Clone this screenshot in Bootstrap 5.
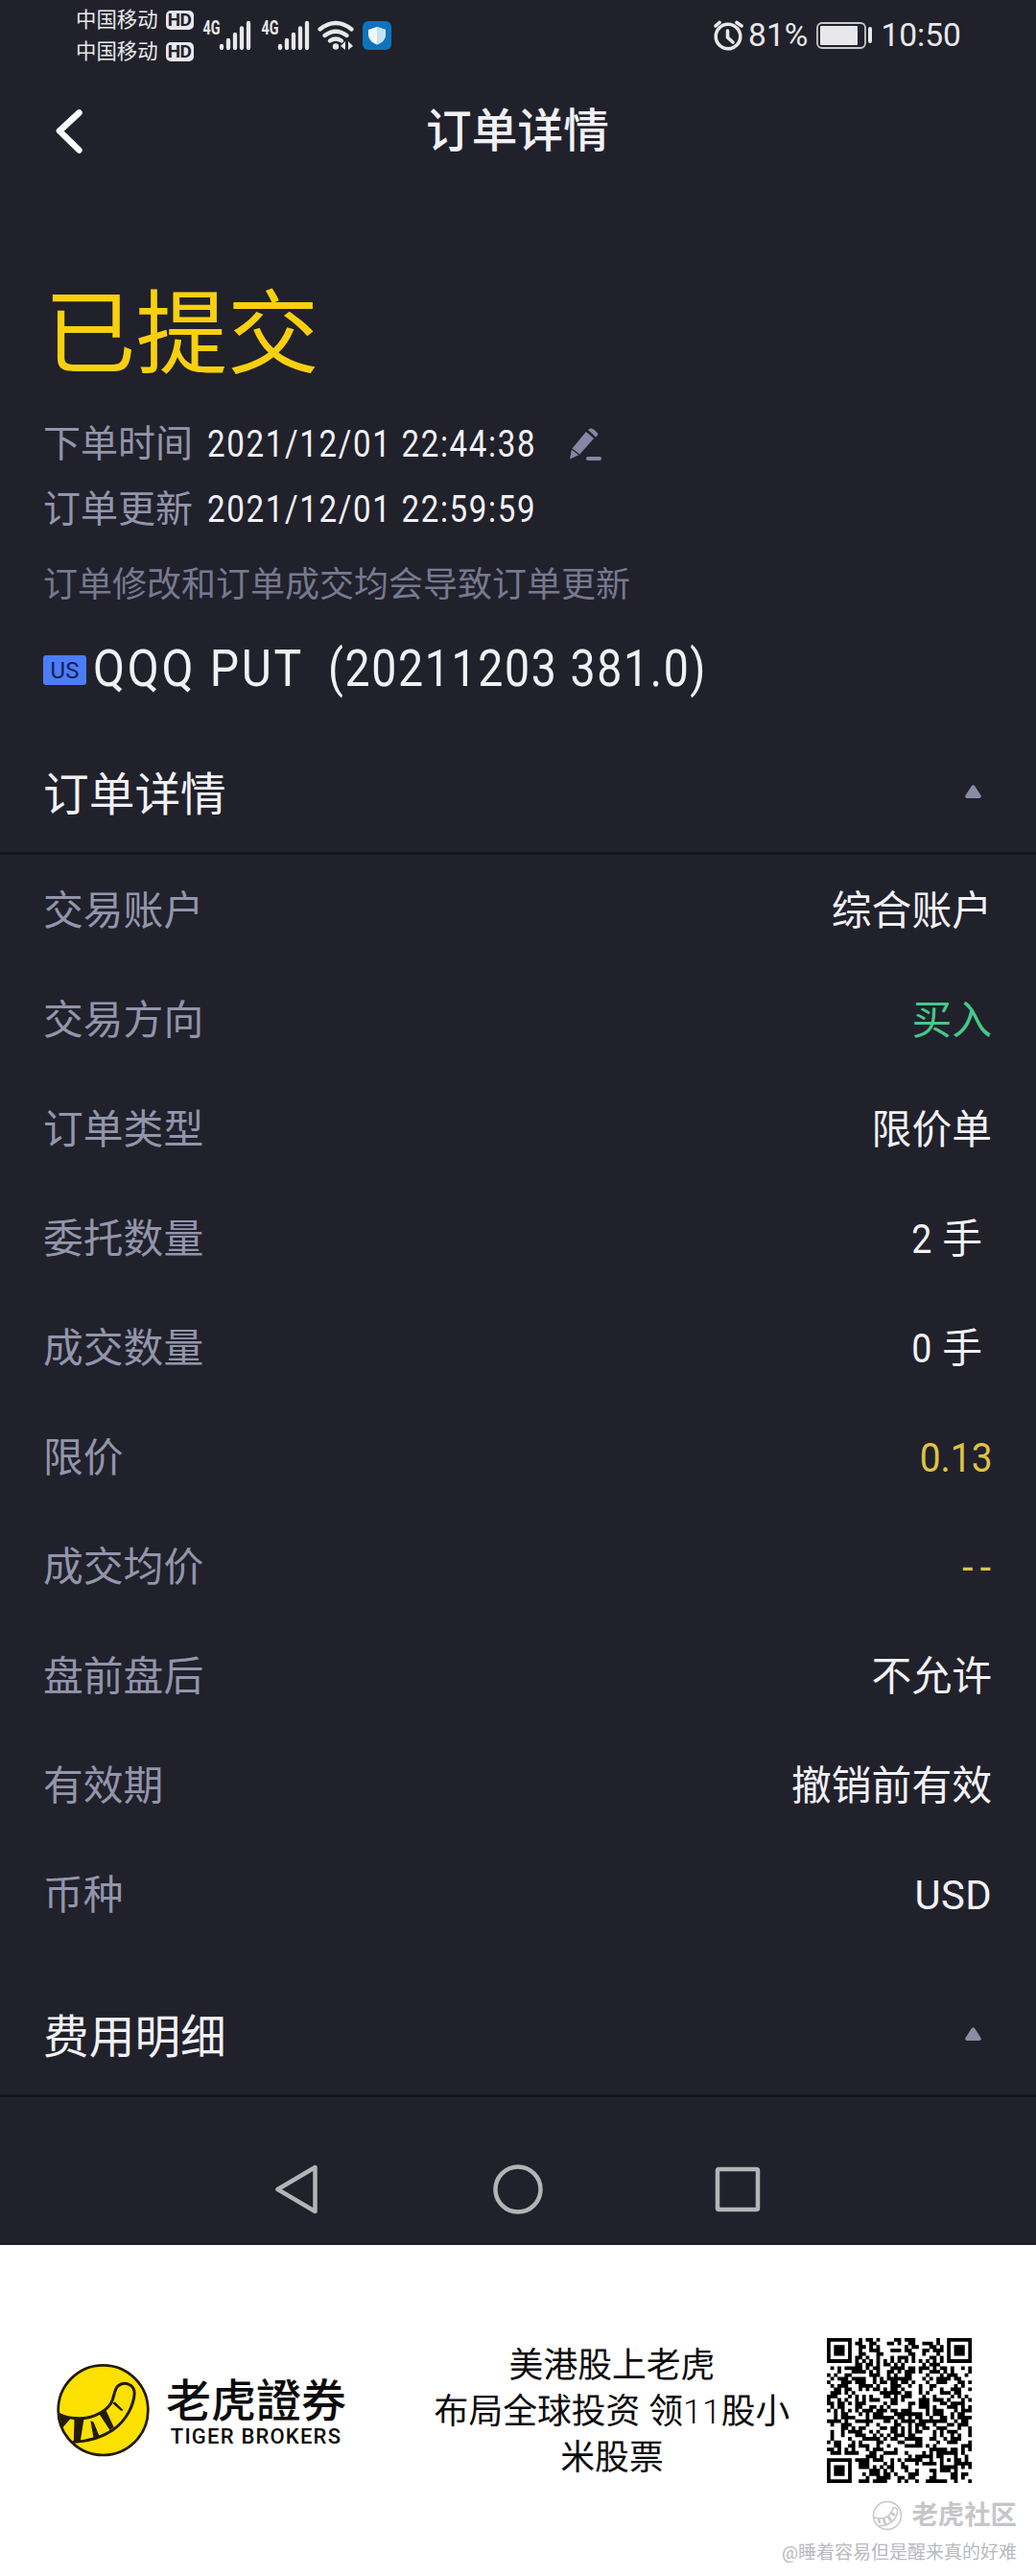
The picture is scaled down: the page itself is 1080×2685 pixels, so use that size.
<!DOCTYPE html>
<html lang="zh-CN">
<head>
<meta charset="utf-8">
<meta name="viewport" content="width=device-width, initial-scale=1">
<title>订单详情</title>
<link href="https://cdn.jsdelivr.net/npm/bootstrap@5.3.0/dist/css/bootstrap.min.css" rel="stylesheet">
<style>
  body { font-family: Roboto, "Noto Sans CJK SC", sans-serif; background: #fff; color: #f1f1f5; line-height: 1; }
  svg { display: block; flex: none; }
  .phone { background: #21212b; height: 2340px; }
  .statusbar { height: 74px; padding: 0 78px 0 79px; color: #e8e8ea; }
  .carrier { font-size: 21.4px; line-height: 33px; }
  .hd { width: 29px; height: 20px; border-radius: 5px; background: #e8e8ea; color: #21212b; font-size: 19px; line-height: 20px; font-weight: 700; letter-spacing: -.5px; }
  .clock { font-size: 33.6px; line-height: 74px; }
  .titlebar { height: 126px; padding-left: 57px; padding-right: 58px; }
  .titlebar h1 { font-size: 47.7px; line-height: 126px; font-weight: 500; }
  .summary { padding: 84px 46px 0 45px; height: 568px; }
  .state { font-size: 95.5px; line-height: 130px; color: #f8d010; padding-left: 1px; }
  .stamps { padding-top: 15px; }
  .stamp { height: 68px; font-size: 39px; line-height: 68px; }
  /* digits are set narrow, with open spacing */
  .when, .sym, .leg { display: inline-block; white-space: nowrap; transform-origin: 0 50%; }
  .stamp .when { letter-spacing: 1.9px; margin-left: 15px; width: 340px; transform: scaleX(.85); }
  .pencil { margin-left: 36px; }
  .muted-label { color: #9295ab; }
  .hint { font-size: 36px; line-height: 90px; color: #77798f; }
  .contract { font-size: 54px; line-height: 84px; height: 84px; }
  .contract .sym { width: 245px; letter-spacing: 3px; transform: scaleX(.89); }
  .contract .leg { width: 400px; letter-spacing: 1.9px; transform: scaleX(.86); }
  .region { width: 45px; height: 31px; background: #4b7dfa; color: #14204f; border-radius: 3px; font-size: 24px; line-height: 32px; margin: 2px 7px 0 0; }
  .section-head { height: 123px; padding: 4px 57px 0 45px; border-bottom: 3px solid #15151f; font-size: 47.7px; }
  .section-head svg { margin-bottom: 10px; }
  .fields { padding: 2px 46px 0 45px; height: 1172px; }
  .field { height: 114px; font-size: 41.8px; line-height: 114px; }
  .buy { color: #45c98a; }
  .price { color: #dfc243; transform: scaleX(.93); transform-origin: 100% 50%; }
  .dashes { color: #dfc243; letter-spacing: 7px; margin-right: -6px; }
  .ccy { letter-spacing: .4px; }
  .lots { padding-right: 10px; }
  .lots b { font-weight: 400; display: inline-block; transform: scaleX(.9); transform-origin: 100% 50%; }
  .softkeys { height: 154px; padding: 70px 286px 0 285px; }
  .promo { height: 345px; padding: 0 67px 0 59px; color: #0b0b0b; position: relative; }
  .logo-block { width: 355px; }
  .brand { margin-left: 17px; }
  .brand-cn { font-family: "Noto Sans CJK TC", sans-serif; font-size: 47px; line-height: 54px; font-weight: 500; }
  .brand-en { font-size: 22px; line-height: 22px; font-weight: 500; letter-spacing: 1.2px; margin-top: 3px; margin-bottom: 2px; }
  .slogan { width: 400px; font-size: 35.8px; line-height: 48px; padding-top: 2px; }
  .slogan span { font-weight: 300; }
  .stampmark { position: absolute; right: 20px; top: 264px; color: #c5c6ca; }
  .stampmark .site { font-size: 27.4px; line-height: 36px; font-weight: 700; }
  .stampmark .user { font-size: 19px; line-height: 30px; margin-top: 6px; color: #b9babd; }
</style>
<script src="https://cdn.jsdelivr.net/npm/bootstrap@5.3.0/dist/js/bootstrap.bundle.min.js"></script>
</head>
<body>
<main class="phone d-flex flex-column">
  <div class="statusbar d-flex justify-content-between align-items-center">
    <div class="d-flex align-items-center">
      <div class="carrier">
        <div class="d-flex align-items-center"><span>中国移动</span><span class="hd text-center ms-2">HD</span></div>
        <div class="d-flex align-items-center"><span>中国移动</span><span class="hd text-center ms-2">HD</span></div>
      </div>
      <svg class="ms-2" width="200" height="34" viewBox="209 19 200 34" fill="#e8e8ea">
        <g id="sig">
          <text x="210.500" y="35" font-size="20" font-weight="700" textLength="18" lengthAdjust="spacingAndGlyphs">4G</text>
          <g stroke="#e8e8ea" stroke-width="4.300" stroke-linecap="round"><path d="M230 47V49M237 41V49M244 35V49M251 28.500V49M258 23V49"/></g>
        </g>
        <use href="#sig" x="61"/>
        <g fill="none" stroke="#e8e8ea" stroke-width="4.200" stroke-linecap="round"><path d="M332.500 29.500Q349 16.500 365.500 29.500M337.500 36Q349 27.500 360.500 36M343 41.500Q349 37.500 355 41.500"/></g>
        <circle cx="349" cy="47.500" r="3.200"/><path d="M359 42V51L354 47ZM362 42V51L367 47Z"/>
        <rect x="377" y="21" width="30" height="30" rx="6" fill="#0c74bd"/>
        <path d="M392 27L401 30V36Q400 42.500 392 45.500Q384 42.500 383 36V30Z" fill="#f3fbff"/><path d="M392 27L401 30V36Q400 42.500 392 45.500Z" fill="#c4e3f2"/>
      </svg>
    </div>
    <div class="d-flex align-items-center clock">
      <svg width="34" height="34" viewBox="742 19 34 34" fill="none" stroke="#e8e8ea" stroke-width="3.600" stroke-linecap="round"><circle cx="759" cy="37" r="12.800"/><path d="M758.500 31V38L764 43M746 26L750 22.500M768 22.500L773 26"/></svg>
      <span class="ms-1">81%</span>
      <svg class="ms-2 me-2" width="60" height="30" viewBox="851 22 60 30"><rect x="853" y="24" width="50" height="26" rx="5" fill="none" stroke="#c9c9cc" stroke-width="1.800"/><rect x="856" y="27" width="39" height="20" rx="1" fill="#e8e8ea"/><rect x="906" y="28" width="4" height="17" rx="2" fill="#e8e8ea"/></svg>
      <span>10:50</span>
    </div>
  </div>

  <header class="titlebar d-flex align-items-center justify-content-between">
    <svg width="32" height="50" viewBox="57 113 32 50" fill="none" stroke="#fff" stroke-width="6.500" stroke-linecap="round" stroke-linejoin="round"><path d="M82.500 118.500L62 137.500L82.500 157.500"/></svg>
    <h1 class="m-0">订单详情</h1>
    <span class="px-3"></span>
  </header>

  <section class="summary">
    <div class="state">已提交</div>
    <div class="stamps">
      <div class="stamp d-flex align-items-center">
        <span class="muted-label">下单时间</span><span class="when">2021/12/01 22:44:38</span>
        <svg class="pencil" width="36" height="36" viewBox="592 443 36 36" fill="#8587a3"><path d="M596 466L611 448L619 455L604 472L594 476.500Z"/><path d="M613 446Q616 443 619.500 446L622 448.500Q625 451 621 453.500Z"/><path d="M596 466L604 472" stroke="#21212b" stroke-width="1.300"/><rect x="611" y="474" width="16" height="4" rx="2"/></svg>
      </div>
      <div class="stamp d-flex align-items-center"><span class="muted-label">订单更新</span><span class="when">2021/12/01 22:59:59</span></div>
    </div>
    <div class="hint">订单修改和订单成交均会导致订单更新</div>
    <div class="contract d-flex align-items-center"><span class="region text-center">US</span><span class="sym">QQQ PUT</span><span class="leg">(20211203 381.0)</span></div>
  </section>

  <div class="section-head d-flex justify-content-between align-items-center">
    <span>订单详情</span>
    <svg width="17" height="14" viewBox="0 0 17 14" fill="#8a8ca6"><path d="M7 1Q8.500-.5 10 1L16.500 11Q17.500 13.500 15 14H2Q-.5 13.500.5 11Z"/></svg>
  </div>
  <section class="fields">
    <div class="field d-flex justify-content-between"><span class="muted-label">交易账户</span><span>综合账户</span></div>
    <div class="field d-flex justify-content-between"><span class="muted-label">交易方向</span><span class="buy">买入</span></div>
    <div class="field d-flex justify-content-between"><span class="muted-label">订单类型</span><span>限价单</span></div>
    <div class="field d-flex justify-content-between"><span class="muted-label">委托数量</span><span class="lots"><b>2</b> 手</span></div>
    <div class="field d-flex justify-content-between"><span class="muted-label">成交数量</span><span class="lots"><b>0</b> 手</span></div>
    <div class="field d-flex justify-content-between"><span class="muted-label">限价</span><span class="price">0.13</span></div>
    <div class="field d-flex justify-content-between"><span class="muted-label">成交均价</span><span class="dashes">--</span></div>
    <div class="field d-flex justify-content-between"><span class="muted-label">盘前盘后</span><span>不允许</span></div>
    <div class="field d-flex justify-content-between"><span class="muted-label">有效期</span><span>撤销前有效</span></div>
    <div class="field d-flex justify-content-between"><span class="muted-label">币种</span><span class="ccy">USD</span></div>
  </section>
  <div class="section-head d-flex justify-content-between align-items-center">
    <span>费用明细</span>
    <svg width="17" height="14" viewBox="0 0 17 14" fill="#8a8ca6"><path d="M7 1Q8.500-.5 10 1L16.500 11Q17.500 13.500 15 14H2Q-.5 13.500.5 11Z"/></svg>
  </div>
  <nav class="softkeys d-flex justify-content-between align-items-start">
    <svg width="50" height="54" viewBox="0 0 50 54" fill="none" stroke="#b4b4b7" stroke-width="4.500" stroke-linejoin="round"><path d="M43.500 3V49L4.500 26Z"/></svg>
    <svg width="54" height="54" viewBox="0 0 54 54" fill="none" stroke="#b4b4b7" stroke-width="4.500"><circle cx="27" cy="26" r="23.500"/></svg>
    <svg width="50" height="54" viewBox="0 0 50 54" fill="none" stroke="#b4b4b7" stroke-width="4.500"><rect x="4" y="5" width="42" height="42" rx="1.500"/></svg>
  </nav>
</main>

<footer class="promo d-flex align-items-center justify-content-between">
  <div class="logo-block d-flex align-items-center">
    <svg width="97" height="97" viewBox="59 101 288 288"><circle cx="203" cy="244" r="139" fill="#fbe000" stroke="#231b05" stroke-width="8"/>
      <g fill="none" stroke="#231b05" stroke-width="9" stroke-linecap="round"><path d="M67 258Q140 285 198 250C245 222 230 190 248 170C268 152 300 164 300 192C298 226 278 274 232 306Q180 340 112 342"/></g>
      <g fill="#231b05"><path d="M66 252L104 268L76 300ZM114 266L144 268L132 344L112 342ZM164 277L173 280L192 326L174 334ZM190 255L212 244L236 296L224 306ZM231 222L240 218L266 244L258 246Z"/></g></svg>
    <div class="brand text-center"><div class="brand-cn">老虎證券</div><div class="brand-en">TIGER BROKERS</div></div>
  </div>
  <div class="slogan text-center">美港股上老虎<br>布局全球投资 领<span>11</span>股小<br>米股票</div>
  <svg id="qr" width="151" height="151" viewBox="0 0 41 41" fill="#000"></svg>
  <div class="stampmark text-end">
    <div class="site d-flex justify-content-end align-items-center">
      <svg class="me-2" width="34" height="34" viewBox="0 0 34 34" fill="none" stroke="#c5c6ca" stroke-width="1.500"><circle cx="17" cy="17" r="14.500"/><path d="M3 19Q17 23 22 12Q23 7 27 10Q29 13 25 20Q19 28 8 28" /><path d="M8 20L9 25M13 20L15 26M18 18L21 23M21 14L25 17" stroke-width="2.500"/></svg>
      <span>老虎社区</span></div>
    <div class="user">@睡着容易但是醒来真的好难</div>
  </div>
</footer>
<script>
  // 41 x 41 code: finder, timing and alignment patterns around the data modules
  const size = 41;
  let seed = 20211201;
  const next = () => (seed = (seed * 1103515245 + 12345) % 2147483648) / 2147483648;
  const ring = (r, c, cr, cc) => Math.max(Math.abs(r - cr), Math.abs(c - cc));
  let d = '';
  for (let r = 0; r < size; r++) for (let c = 0; c < size; c++) {
    let on = next() < 0.5;
    if (r === 6 || c === 6) on = (r + c) % 2 === 0;
    for (const [cr, cc] of [[3, 3], [3, 37], [37, 3]]) {
      const k = ring(r, c, cr, cc);
      if (k <= 4) on = k !== 4 && k !== 2;
    }
    const a = ring(r, c, 34, 34);
    if (a <= 2) on = a !== 1;
    if (on) d += `M${c} ${r}h1.030v1.030h-1.030z`;
  }
  document.getElementById('qr').innerHTML = `<path d="${d}"/>`;
</script>
</body>
</html>
